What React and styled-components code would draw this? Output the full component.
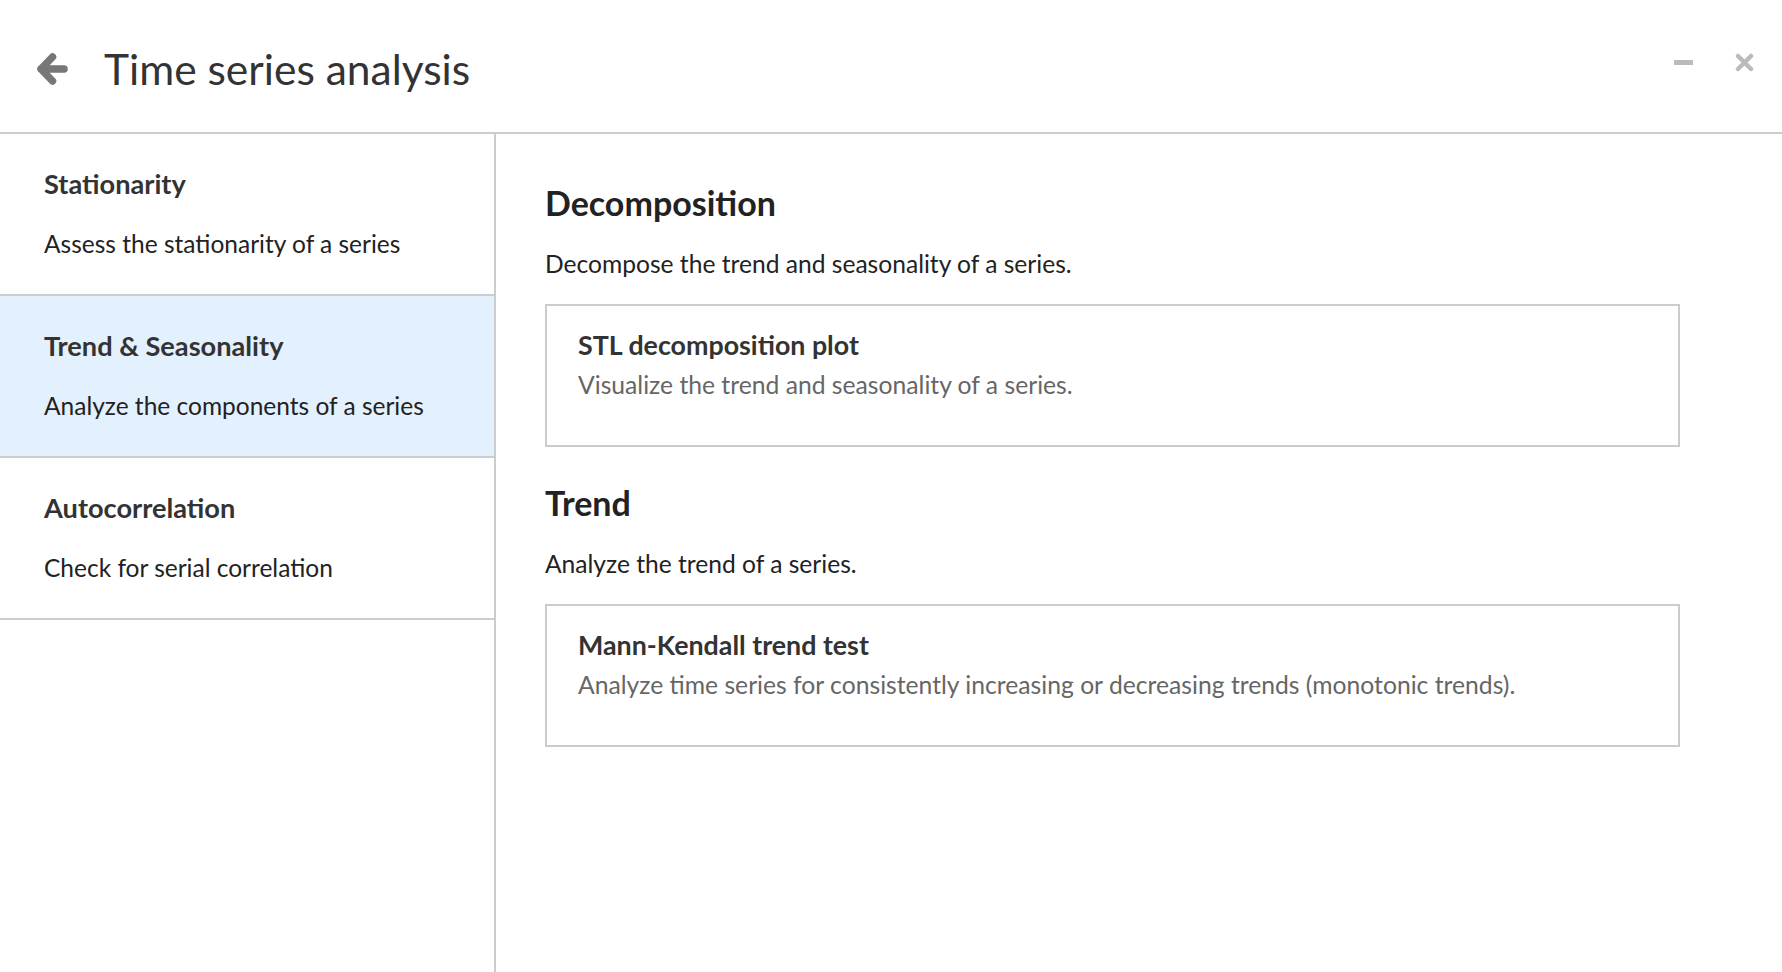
import React from "react";
import styled, { createGlobalStyle } from "styled-components";

const GlobalStyle = createGlobalStyle`
  html, body {
    margin: 0;
    padding: 0;
    background: #ffffff;
  }
  body {
    font-family: Lato, "Open Sans", "Liberation Sans", sans-serif;
    color: #333333;
  }
  * { box-sizing: border-box; }
`;

const Page = styled.div`
  display: flex;
  flex-direction: column;
  height: 100vh;
  background: #fff;
`;

const Header = styled.header`
  flex: 0 0 auto;
  height: 134px;
  display: flex;
  align-items: center;
  padding: 6px 28px 0 37px;
  border-bottom: 2px solid #cccccc;
`;

const BackButton = styled.button`
  display: flex;
  align-items: center;
  justify-content: center;
  padding: 0;
  border: 0;
  background: transparent;
  cursor: pointer;
  width: 31px;
  height: 32px;
`;

const Title = styled.h1`
  margin: 0 0 0 36px;
  font-size: 42.5px;
  line-height: 54px;
  font-weight: 400;
  color: #333333;
`;

const WindowControls = styled.div`
  margin-left: auto;
  display: flex;
  align-items: center;
  gap: 42px;
  margin-top: -14px;
`;

const ControlButton = styled.button`
  display: flex;
  align-items: center;
  justify-content: center;
  padding: 0;
  border: 0;
  background: transparent;
  width: 19px;
  height: 19px;
  cursor: pointer;
`;

const Body = styled.div`
  flex: 1 1 auto;
  display: flex;
  min-height: 0;
`;

const Sidebar = styled.nav`
  flex: 0 0 496px;
  border-right: 2px solid #cccccc;
  display: flex;
  flex-direction: column;
`;

const NavItem = styled.div`
  height: 162px;
  padding: 33px 20px 0 44px;
  border-bottom: 2px solid #cccccc;
  background: ${(p) => (p.$active ? "#e3f0fd" : "#ffffff")};
  cursor: pointer;
`;

const NavTitle = styled.div`
  font-size: 27.2px;
  line-height: 34px;
  font-weight: 700;
  color: #333333;
`;

const NavDesc = styled.div`
  margin-top: 28px;
  font-size: 24.5px;
  line-height: 30px;
  color: #222222;
`;

const Main = styled.main`
  flex: 1 1 auto;
  padding: 47px 102px 0 49px;
`;

const Section = styled.section`
  & + & {
    margin-top: 34px;
  }
`;

const SectionTitle = styled.h2`
  margin: 0;
  font-size: 34px;
  line-height: 44px;
  font-weight: 700;
  color: #222222;
`;

const SectionDesc = styled.p`
  margin: 24px 0 0 0;
  font-size: 24.6px;
  line-height: 30px;
  color: #222222;
`;

const Card = styled.div`
  margin-top: 25px;
  border: 2px solid #cccccc;
  padding: 23px 30px 45px 31px;
  background: #fff;
  cursor: pointer;
`;

const CardTitle = styled.div`
  font-size: 26.8px;
  line-height: 33px;
  font-weight: 700;
  color: #333333;
`;

const CardDesc = styled.div`
  margin-top: 8px;
  font-size: 24.7px;
  line-height: 30px;
  color: #666666;
`;

const BackIcon = () => (
  <svg width="31" height="32" viewBox="0 0 31 32" fill="none">
    <path
      d="M15.5 4 L4 16 L15.5 28 M4 16 L27 16"
      stroke="#777777"
      strokeWidth="7.5"
      strokeLinecap="round"
      strokeLinejoin="round"
    />
  </svg>
);

const MinimizeIcon = () => (
  <svg width="19" height="19" viewBox="0 0 19 19">
    <rect x="0" y="7" width="19" height="5" fill="#bbbbbb" />
  </svg>
);

const CloseIcon = () => (
  <svg width="19" height="19" viewBox="0 0 19 19">
    <path
      d="M3 3 L16 16 M16 3 L3 16"
      stroke="#bbbbbb"
      strokeWidth="4.5"
      strokeLinecap="round"
    />
  </svg>
);

const navItems = [
  { title: "Stationarity", desc: "Assess the stationarity of a series" },
  { title: "Trend & Seasonality", desc: "Analyze the components of a series", active: true },
  { title: "Autocorrelation", desc: "Check for serial correlation" },
];

const sections = [
  {
    title: "Decomposition",
    desc: "Decompose the trend and seasonality of a series.",
    cards: [
      {
        title: "STL decomposition plot",
        desc: "Visualize the trend and seasonality of a series.",
      },
    ],
  },
  {
    title: "Trend",
    desc: "Analyze the trend of a series.",
    cards: [
      {
        title: "Mann-Kendall trend test",
        desc: "Analyze time series for consistently increasing or decreasing trends (monotonic trends).",
      },
    ],
  },
];

export default function App() {
  return (
    <>
      <GlobalStyle />
      <Page>
        <Header>
          <BackButton aria-label="Back">
            <BackIcon />
          </BackButton>
          <Title>Time series analysis</Title>
          <WindowControls>
            <ControlButton aria-label="Minimize">
              <MinimizeIcon />
            </ControlButton>
            <ControlButton aria-label="Close">
              <CloseIcon />
            </ControlButton>
          </WindowControls>
        </Header>
        <Body>
          <Sidebar>
            {navItems.map((item) => (
              <NavItem key={item.title} $active={item.active}>
                <NavTitle>{item.title}</NavTitle>
                <NavDesc>{item.desc}</NavDesc>
              </NavItem>
            ))}
          </Sidebar>
          <Main>
            {sections.map((s) => (
              <Section key={s.title}>
                <SectionTitle>{s.title}</SectionTitle>
                <SectionDesc>{s.desc}</SectionDesc>
                {s.cards.map((c) => (
                  <Card key={c.title}>
                    <CardTitle>{c.title}</CardTitle>
                    <CardDesc>{c.desc}</CardDesc>
                  </Card>
                ))}
              </Section>
            ))}
          </Main>
        </Body>
      </Page>
    </>
  );
}
